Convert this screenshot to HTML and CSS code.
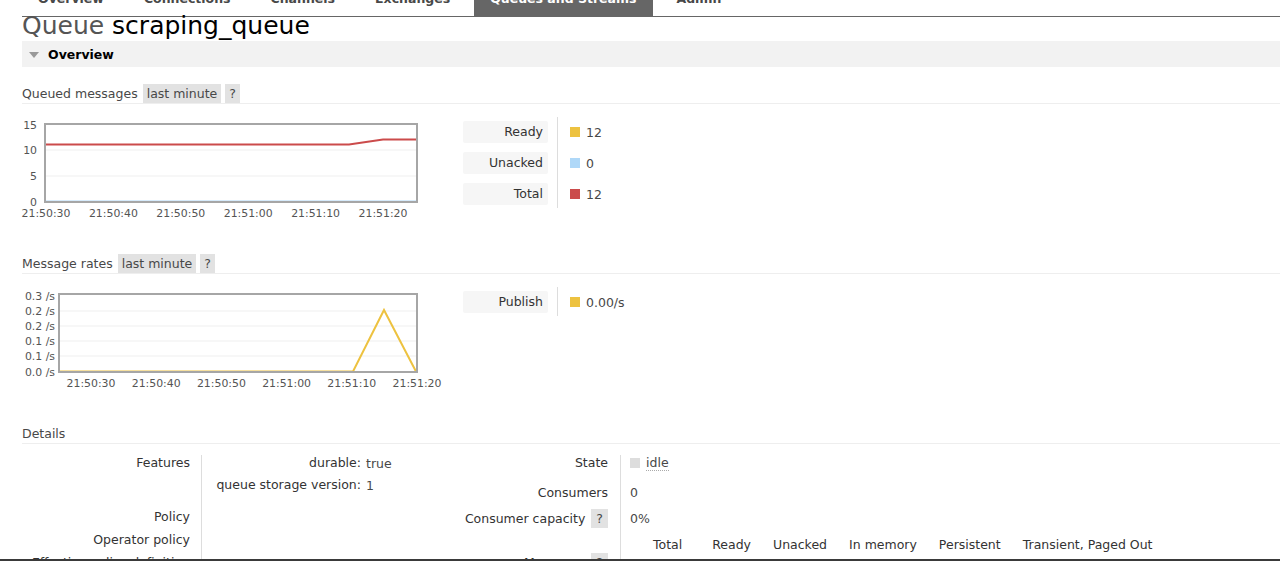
FILE: index.html
```html
<!DOCTYPE html>
<html lang="en">
<head>
<meta charset="utf-8">
<title>RabbitMQ Management: Queue scraping_queue</title>
<link rel="stylesheet" href="styles.css">
</head>
<body>
<div class="page">
  <ul class="tabs">
    <li class="tab">Overview</li>
    <li class="tab">Connections</li>
    <li class="tab">Channels</li>
    <li class="tab">Exchanges</li>
    <li class="tab active">Queues and Streams</li>
    <li class="tab">Admin</li>
  </ul>

  <main class="main">
    <h1 class="title"><span class="title-kind">Queue</span> scraping_queue</h1>

    <h2 class="section-bar"><span class="tri"></span>Overview</h2>

    <div class="block">
      <h3 class="sub-head">Queued messages <span class="pill">last minute</span><span class="pill">?</span></h3>
      <div class="chart-row">
        <svg class="chart" width="430" height="105" viewBox="0 0 430 105">
          <rect x="25" y="9" width="372" height="78" fill="#fff"/>
          <line x1="26" y1="35" x2="396" y2="35" stroke="#efefef" stroke-width="1"/>
          <line x1="26" y1="61" x2="396" y2="61" stroke="#efefef" stroke-width="1"/>
          <polyline points="26,86.5 396,86.5" fill="none" stroke="#afd8f8" stroke-width="2"/>
          <polyline points="26,29.5 329,29.5 363,24.5 396,24.5" fill="none" stroke="#cb4b4b" stroke-width="2"/>
          <rect x="25" y="9" width="372" height="78" fill="none" stroke="#a6a6a6" stroke-width="2"/>
          <g class="axis" text-anchor="end">
            <text x="17" y="14">15</text>
            <text x="17" y="39">10</text>
            <text x="17" y="65">5</text>
            <text x="17" y="91">0</text>
          </g>
          <g class="axis" text-anchor="middle">
            <text x="26" y="102">21:50:30</text>
            <text x="93.4" y="102">21:50:40</text>
            <text x="160.8" y="102">21:50:50</text>
            <text x="228.2" y="102">21:51:00</text>
            <text x="295.6" y="102">21:51:10</text>
            <text x="363" y="102">21:51:20</text>
          </g>
        </svg>
        <div class="legend">
          <div class="legend-labels">
            <div class="legend-label">Ready</div>
            <div class="legend-label">Unacked</div>
            <div class="legend-label">Total</div>
          </div>
          <div class="legend-values">
            <div class="legend-value"><span class="swatch sw-ready"></span>12</div>
            <div class="legend-value"><span class="swatch sw-unacked"></span>0</div>
            <div class="legend-value"><span class="swatch sw-total"></span>12</div>
          </div>
        </div>
      </div>
    </div>

    <div class="block block-rates">
      <h3 class="sub-head">Message rates <span class="pill">last minute</span><span class="pill">?</span></h3>
      <div class="chart-row">
        <svg class="chart" width="430" height="110" viewBox="0 0 430 110">
          <rect x="39" y="9" width="358" height="78" fill="#fff"/>
          <line x1="40" y1="26" x2="396" y2="26" stroke="#efefef" stroke-width="1"/>
          <line x1="40" y1="41" x2="396" y2="41" stroke="#efefef" stroke-width="1"/>
          <line x1="40" y1="56" x2="396" y2="56" stroke="#efefef" stroke-width="1"/>
          <line x1="40" y1="71" x2="396" y2="71" stroke="#efefef" stroke-width="1"/>
          <polyline points="40,86.5 333,86.5 364,25 396,86.5" fill="none" stroke="#edc240" stroke-width="2"/>
          <rect x="39" y="9" width="358" height="78" fill="none" stroke="#a6a6a6" stroke-width="2"/>
          <g class="axis" text-anchor="end">
            <text x="35" y="15">0.3 /s</text>
            <text x="35" y="30">0.2 /s</text>
            <text x="35" y="45">0.2 /s</text>
            <text x="35" y="60">0.1 /s</text>
            <text x="35" y="75">0.1 /s</text>
            <text x="35" y="91">0.0 /s</text>
          </g>
          <g class="axis" text-anchor="middle">
            <text x="71" y="102">21:50:30</text>
            <text x="136.2" y="102">21:50:40</text>
            <text x="201.4" y="102">21:50:50</text>
            <text x="266.6" y="102">21:51:00</text>
            <text x="331.8" y="102">21:51:10</text>
            <text x="397" y="102">21:51:20</text>
          </g>
        </svg>
        <div class="legend">
          <div class="legend-labels">
            <div class="legend-label">Publish</div>
          </div>
          <div class="legend-values">
            <div class="legend-value"><span class="swatch sw-ready"></span>0.00/s</div>
          </div>
        </div>
      </div>
    </div>

    <div class="block block-details">
      <h3 class="sub-head">Details</h3>
      <div class="details">
        <div class="kv kv-left">
          <div class="kv-label kv-features">Features</div>
          <div class="kv-value kv-features">
            <div class="features">
              <div class="feat-key">durable:</div><div class="feat-val">true</div>
              <div class="feat-key">queue storage version:</div><div class="feat-val">1</div>
            </div>
          </div>
          <div class="kv-label">Policy</div><div class="kv-value"></div>
          <div class="kv-label">Operator policy</div><div class="kv-value"></div>
          <div class="kv-label">Effective policy definition</div><div class="kv-value"></div>
        </div>

        <div class="kv kv-right">
          <div class="kv-label row-state">State</div>
          <div class="kv-value row-state"><span class="state-box"></span><abbr class="state" title="idle">idle</abbr></div>
          <div class="kv-label row-consumers">Consumers</div>
          <div class="kv-value row-consumers">0</div>
          <div class="kv-label row-cap">Consumer capacity <span class="pill pill-inline">?</span></div>
          <div class="kv-value row-cap">0%</div>
          <div class="kv-label row-msgs">Messages <span class="pill pill-inline">?</span></div>
          <div class="kv-value row-msgs">
            <div class="msg-table">
              <div class="mt-h mt-first">Total</div>
              <div class="mt-h">Ready</div>
              <div class="mt-h">Unacked</div>
              <div class="mt-h">In memory</div>
              <div class="mt-h">Persistent</div>
              <div class="mt-h">Transient, Paged Out</div>
              <div class="mt-v mt-vfirst">12</div>
              <div class="mt-v">12</div>
              <div class="mt-v">0</div>
              <div class="mt-v">12</div>
              <div class="mt-v">12</div>
              <div class="mt-v">0</div>
            </div>
          </div>
        </div>
      </div>
    </div>
  </main>
</div>
</body>
</html>
```

FILE: styles.css
```css
html, body {
  margin: 0;
  padding: 0;
  background: #fff;
}

body {
  font-family: "DejaVu Sans", Verdana, sans-serif;
  font-size: 12.5px;
  color: #484848;
}

.page {
  height: 561px;
  overflow: hidden;
  box-sizing: border-box;
  border-bottom: 2px solid #3a3a3a;
}

/* ---------- tabs ---------- */
.tabs {
  display: flex;
  list-style: none;
  margin: -11px 0 0 22px;
  padding: 0;
  border-bottom: 1px solid #666;
}

.tab {
  font-weight: bold;
  font-size: 12.5px;
  line-height: 20px;
  padding: 0 16px 7px;
  margin-right: 8px;
  color: #484848;
}

.tab.active {
  background: #666;
  color: #fff;
}

/* ---------- main ---------- */
.main {
  padding-left: 22px;
}

.title {
  margin: -3px 0 0;
  font-size: 25px;
  line-height: 24px;
  font-weight: normal;
  color: #000;
}

.title-kind {
  color: #555;
}

.section-bar {
  margin: 3px 0 0;
  box-sizing: border-box;
  height: 26px;
  padding: 2px 0 0 7px;
  line-height: 24px;
  background: #f2f2f2;
  font-size: 12.5px;
  font-weight: bold;
  color: #000;
  display: flex;
  align-items: center;
}

.tri {
  width: 0;
  height: 0;
  border-left: 5px solid transparent;
  border-right: 5px solid transparent;
  border-top: 6px solid #999;
  margin-right: 9px;
}

.block {
  margin-top: 17px;
}

.block-rates {
  margin-top: 34px;
}

.block-details {
  margin-top: 29px;
}

.sub-head {
  margin: 0;
  display: flex;
  align-items: stretch;
  height: 19px;
  line-height: 19px;
  font-size: 12.5px;
  font-weight: normal;
  color: #484848;
  border-bottom: 1px solid #eee;
}

.pill {
  background: #e2e2e2;
  padding: 0 4px;
  margin-left: 4px;
  color: #484848;
}

.sub-head .pill:first-child {
  margin-left: 5px;
}

.pill-inline {
  display: inline-block;
  line-height: 19px;
  margin-left: 2px;
  padding: 0 5px;
  margin-top: -2px;
  margin-bottom: -2px;
}

/* ---------- charts ---------- */
.chart-row {
  display: flex;
  align-items: flex-start;
  margin-top: 11px;
}

.chart {
  display: block;
  margin-left: -2px;
  flex: none;
}

.axis text {
  font-family: "DejaVu Sans", Verdana, sans-serif;
  font-size: 10.9px;
  fill: #545454;
}

.legend {
  display: flex;
  margin-left: 13px;
  margin-top: 2px;
}

.legend-labels {
  display: flex;
  flex-direction: column;
  gap: 9px;
  padding-top: 4px;
  width: 85px;
}

.legend-label {
  height: 22px;
  line-height: 22px;
  background: #f6f6f6;
  border-radius: 2px;
  text-align: right;
  padding-right: 5px;
  color: #333;
}

.legend-values {
  display: flex;
  flex-direction: column;
  gap: 9px;
  margin-left: 9px;
  padding: 4px 0 3px 12px;
  border-left: 1px solid #ddd;
}

.legend-value {
  height: 22px;
  display: flex;
  align-items: center;
  color: #484848;
}

.swatch {
  width: 10px;
  height: 10px;
  margin-right: 6px;
}

.sw-ready { background: #edc240; }
.sw-unacked { background: #afd8f8; }
.sw-total { background: #cb4b4b; }

/* ---------- details ---------- */
.details {
  display: flex;
  align-items: flex-start;
  margin-top: 11px;
}

.kv {
  display: grid;
  line-height: 15px;
}

.kv-left {
  width: 418px;
  grid-template-columns: 179px 1fr;
}

.kv-right {
  grid-template-columns: 180px auto;
}

.kv-label {
  text-align: right;
  padding: 0 11px 8px 0;
  color: #333;
  white-space: nowrap;
}

.kv-value {
  border-left: 1px solid #ddd;
  padding: 0 0 8px 13px;
}

.kv-left .kv-features.kv-value {
  padding-bottom: 10px;
}

.features {
  display: grid;
  grid-template-columns: 146px auto;
}

.feat-key {
  text-align: right;
  padding-bottom: 7px;
  color: #333;
}

.feat-val {
  padding: 1px 0 6px 5px;
}

.kv-right .kv-label {
  padding-right: 12px;
}

.kv-right .kv-value {
  padding-left: 9px;
}

.row-state { padding-bottom: 15px !important; }
.row-consumers { padding-bottom: 11px !important; }
.row-cap { padding-bottom: 11px !important; }
.kv-label.row-msgs { padding-top: 18px; }
.kv-value.row-msgs { padding-top: 0; }

.state-box {
  display: inline-block;
  width: 10px;
  height: 10px;
  background: #ddd;
  margin-right: 6px;
  vertical-align: -1px;
}

.state {
  text-decoration: none;
  border-bottom: 1px dotted #aaa;
}

.msg-table {
  display: grid;
  grid-template-columns: repeat(6, auto);
  justify-content: start;
}

.mt-h {
  padding: 0 0 8px 22px;
  color: #333;
}

.mt-first {
  padding-left: 23px;
  padding-right: 8px;
}

.mt-v {
  text-align: right;
}

.mt-vfirst {
  padding-right: 8px;
}
```
